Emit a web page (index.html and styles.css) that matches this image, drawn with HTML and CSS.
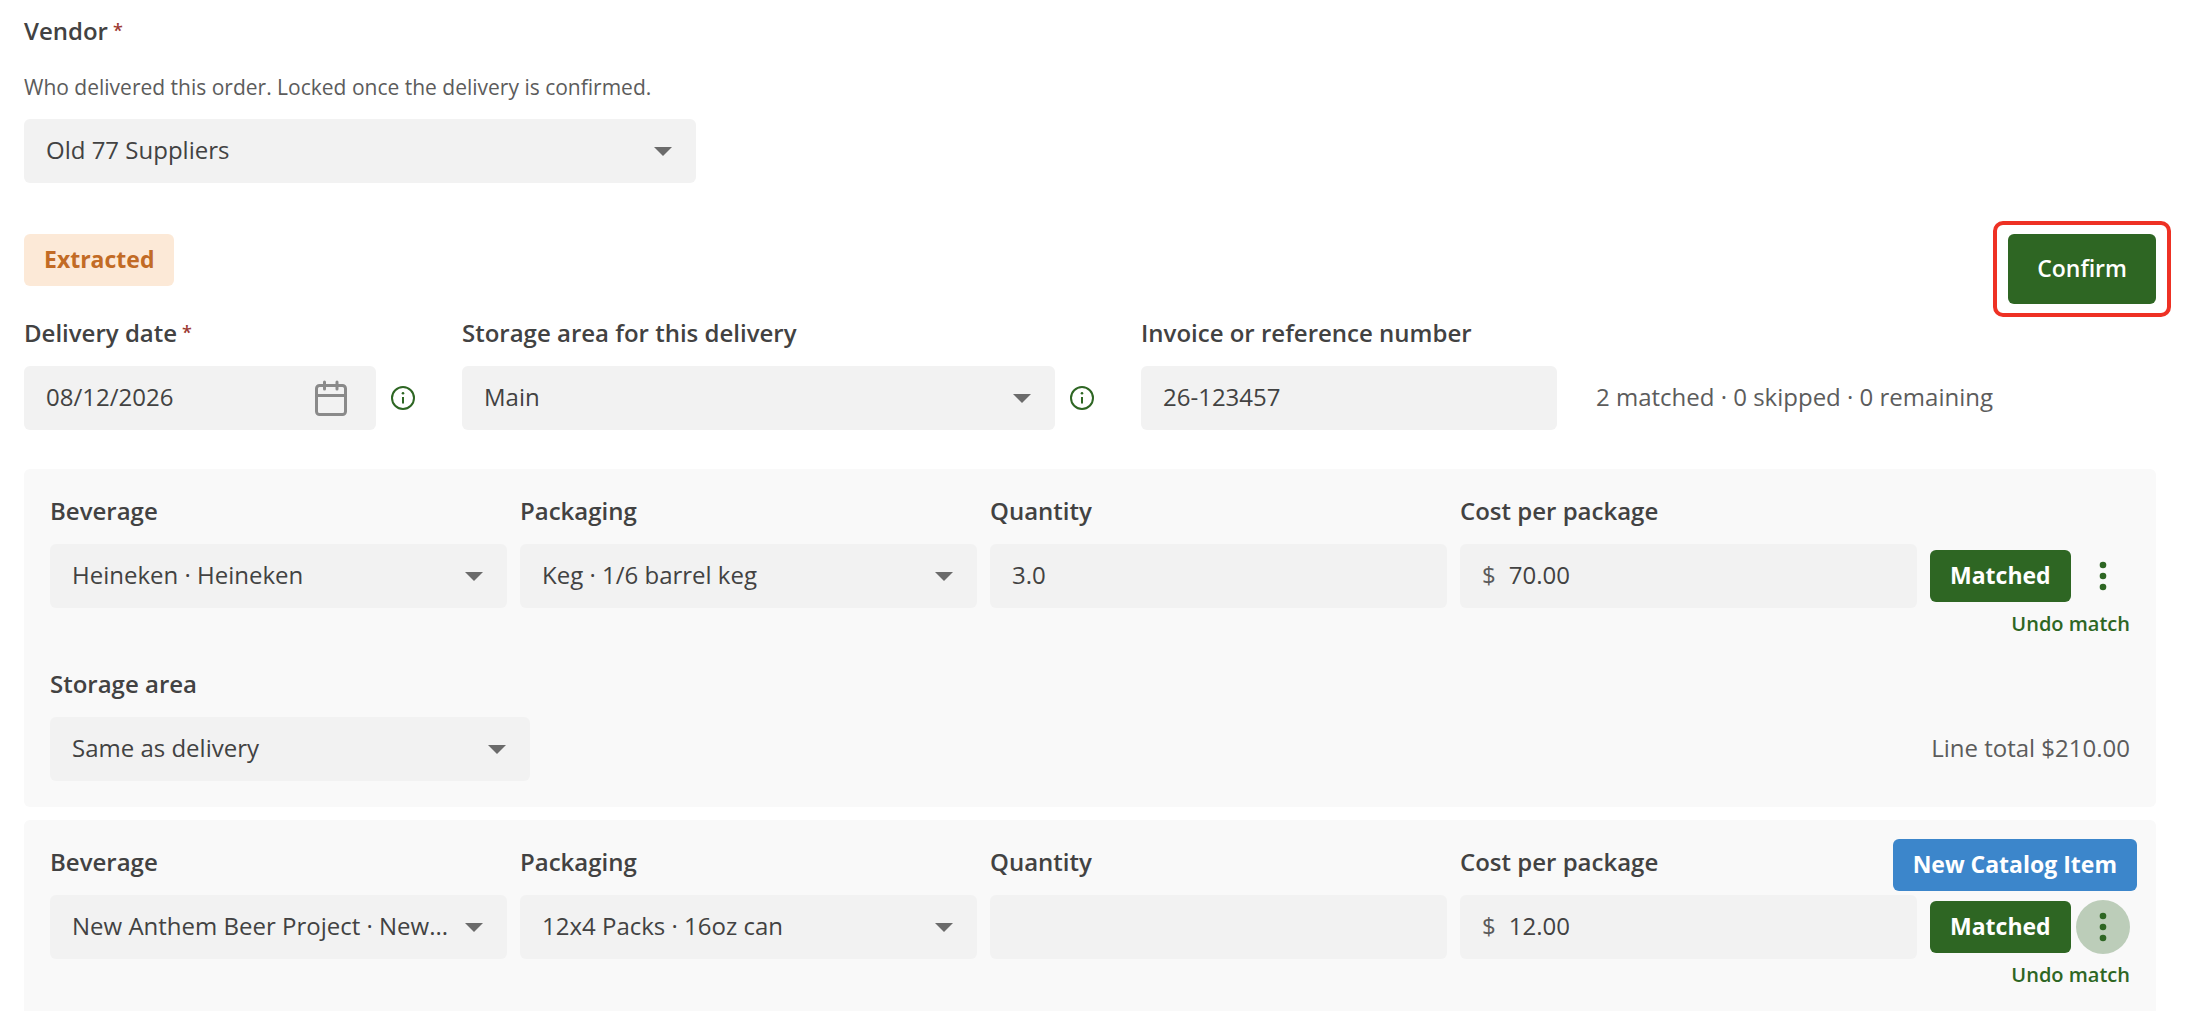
FILE: index.html
```html
<!DOCTYPE html>
<html lang="en">
<head>
  <meta charset="UTF-8" />
  <title>Confirm delivery</title>
  <link rel="stylesheet" href="styles.css">
</head>
<body>

  <form class="delivery">

    <div class="field vendor">
      <label for="vendor">Vendor<span class="required">*</span></label>
      <p class="help">Who delivered this order. Locked once the delivery is confirmed.</p>
      <div class="select">
        <select id="vendor">
          <option>Old 77 Suppliers</option>
        </select>
      </div>
    </div>

    <div class="status-row">
      <span class="badge badge-extracted">Extracted</span>
      <div class="highlight">
        <button type="submit" class="confirm">Confirm</button>
      </div>
    </div>

    <div class="details">
      <div class="field">
        <label for="date">Delivery date<span class="required">*</span></label>
        <div class="with-info">
          <div class="control date">
            <input type="text" id="date" value="08/12/2026">
            <button type="button" class="calendar" aria-label="Choose date">
              <svg width="34" height="36" viewBox="0 0 34 36" fill="none" stroke="#8a8a8a" stroke-width="3" stroke-linecap="round">
                <rect x="2.5" y="5.5" width="29" height="29" rx="3"/>
                <path d="M2.5 15.5H31.5M10.5 2V9M23 2V9"/>
              </svg>
            </button>
          </div>
          <button type="button" class="info" aria-label="About the delivery date">
            <svg width="24" height="24" viewBox="0 0 24 24" fill="none" stroke="#2e6623" stroke-width="2">
              <circle cx="12" cy="12" r="11"/>
              <path d="M12 11V17.5"/>
              <circle cx="12" cy="7.3" r="1.3" fill="#2e6623" stroke="none"/>
            </svg>
          </button>
        </div>
      </div>

      <div class="field">
        <label for="storage">Storage area for this delivery</label>
        <div class="with-info">
          <div class="select">
            <select id="storage">
              <option>Main</option>
            </select>
          </div>
          <button type="button" class="info" aria-label="About the storage area">
            <svg width="24" height="24" viewBox="0 0 24 24" fill="none" stroke="#2e6623" stroke-width="2">
              <circle cx="12" cy="12" r="11"/>
              <path d="M12 11V17.5"/>
              <circle cx="12" cy="7.3" r="1.3" fill="#2e6623" stroke="none"/>
            </svg>
          </button>
        </div>
      </div>

      <div class="field">
        <label for="invoice">Invoice or reference number</label>
        <div class="control">
          <input type="text" id="invoice" value="26-123457">
        </div>
      </div>

      <p class="summary">2 matched · 0 skipped · 0 remaining</p>
    </div>

    <section class="line">
      <div class="line-grid">
        <div class="field">
          <label for="beverage1">Beverage</label>
          <div class="select">
            <select id="beverage1">
              <option>Heineken · Heineken</option>
            </select>
          </div>
        </div>
        <div class="field">
          <label for="packaging1">Packaging</label>
          <div class="select">
            <select id="packaging1">
              <option>Keg · 1/6 barrel keg</option>
            </select>
          </div>
        </div>
        <div class="field">
          <label for="quantity1">Quantity</label>
          <div class="control">
            <input type="text" id="quantity1" value="3.0">
          </div>
        </div>
        <div class="field">
          <label for="cost1">Cost per package</label>
          <div class="control money">
            <span class="prefix">$</span>
            <input type="text" id="cost1" value="70.00">
          </div>
        </div>
        <div class="actions">
          <div class="actions-row">
            <span class="badge badge-matched">Matched</span>
            <button type="button" class="more" aria-label="More actions">
              <svg width="8" height="30" viewBox="0 0 8 30" fill="#2e6623">
                <circle cx="4" cy="4" r="3.3"/>
                <circle cx="4" cy="15" r="3.3"/>
                <circle cx="4" cy="26" r="3.3"/>
              </svg>
            </button>
          </div>
          <button type="button" class="undo">Undo match</button>
        </div>
      </div>

      <div class="line-footer">
        <div class="field line-storage">
          <label for="storage1">Storage area</label>
          <div class="select">
            <select id="storage1">
              <option>Same as delivery</option>
            </select>
          </div>
        </div>
        <p class="line-total">Line total $210.00</p>
      </div>
    </section>

    <section class="line">
      <span class="badge badge-new">New Catalog Item</span>
      <div class="line-grid">
        <div class="field">
          <label for="beverage2">Beverage</label>
          <div class="select">
            <select id="beverage2">
              <option>New Anthem Beer Project · New...</option>
            </select>
          </div>
        </div>
        <div class="field">
          <label for="packaging2">Packaging</label>
          <div class="select">
            <select id="packaging2">
              <option>12x4 Packs · 16oz can</option>
            </select>
          </div>
        </div>
        <div class="field">
          <label for="quantity2">Quantity</label>
          <div class="control">
            <input type="text" id="quantity2">
          </div>
        </div>
        <div class="field">
          <label for="cost2">Cost per package</label>
          <div class="control money">
            <span class="prefix">$</span>
            <input type="text" id="cost2" value="12.00">
          </div>
        </div>
        <div class="actions">
          <div class="actions-row">
            <span class="badge badge-matched">Matched</span>
            <button type="button" class="more more-active" aria-label="More actions">
              <svg width="8" height="30" viewBox="0 0 8 30" fill="#2e6623">
                <circle cx="4" cy="4" r="3.3"/>
                <circle cx="4" cy="15" r="3.3"/>
                <circle cx="4" cy="26" r="3.3"/>
              </svg>
            </button>
          </div>
          <button type="button" class="undo">Undo match</button>
        </div>
      </div>
    </section>

  </form>

</body>
</html>
```
FILE: styles.css
```css
* {
  box-sizing: border-box;
}

body {
  font-family: "Open Sans", sans-serif;
  font-size: 24px;
  line-height: 32px;
  color: #424242;
  background: white;
  margin: 0;
}

p {
  margin: 0;
}

button,
input,
select {
  font: inherit;
  color: inherit;
  background: none;
  border: none;
  padding: 0;
  margin: 0;
}

button {
  cursor: pointer;
}

svg {
  display: block;
}

.delivery {
  padding: 15px 30px 0 24px;
}

/* Fields */

.field {
  min-width: 0;
}

.field label {
  display: block;
  font-weight: 600;
  margin-bottom: 17px;
}

.required {
  color: #9c3a33;
  font-size: 18px;
  line-height: 1;
  vertical-align: 3px;
  margin-left: 5px;
}

.control,
.select {
  height: 64px;
  background: #f2f2f2;
  border-radius: 6px;
}

.control {
  display: flex;
  align-items: center;
}

.control input {
  flex: 1;
  min-width: 0;
  height: 64px;
  padding: 0 22px 3px;
}

.select {
  position: relative;
}

.select select {
  appearance: none;
  width: 100%;
  height: 64px;
  padding: 0 52px 2px 22px;
  text-overflow: ellipsis;
}

.select::after {
  content: "";
  position: absolute;
  top: 28px;
  right: 24px;
  border: 9px solid transparent;
  border-top-color: #6b6b6b;
  border-bottom: 0;
  pointer-events: none;
}

/* Vendor */

.vendor {
  max-width: 672px;
}

.vendor label {
  margin-bottom: 24px;
}

.help {
  font-size: 21px;
  color: #5c5c5c;
  margin-bottom: 16px;
}

/* Badges and confirm */

.badge {
  display: inline-block;
  font-size: 23px;
  font-weight: 700;
  padding: 9px 20px 11px;
  border-radius: 6px;
  white-space: nowrap;
}

.badge-extracted {
  color: #c26b25;
  background: #fce9d7;
}

.badge-matched {
  color: white;
  background: #2e6623;
}

.badge-new {
  position: absolute;
  top: 19px;
  right: 19px;
  color: white;
  background: #3c86cb;
}

.status-row {
  display: flex;
  align-items: flex-start;
  justify-content: space-between;
  margin: 51px 0 13px;
}

.highlight {
  position: relative;
}

.highlight::after {
  content: "";
  position: absolute;
  inset: -13px -15px;
  border: 4px solid #ee3124;
  border-radius: 10px;
  pointer-events: none;
}

.confirm {
  display: block;
  height: 70px;
  padding: 0 29px 2px;
  font-size: 23px;
  font-weight: 600;
  color: white;
  background: #2e6623;
  border-radius: 6px;
}

/* Delivery details */

.details {
  display: grid;
  grid-template-columns: 399fr 640fr 416fr 560fr;
  gap: 39px;
  align-items: end;
}

.with-info {
  display: flex;
  align-items: center;
  gap: 15px;
  padding-right: 8px;
}

.with-info .control,
.with-info .select {
  flex: 1;
  min-width: 0;
}

.calendar {
  margin-right: 28px;
}

.summary,
.line-total {
  line-height: 62px;
  padding-bottom: 2px;
  color: #5c5c5c;
}

/* Order lines */

.line {
  position: relative;
  background: #f9f9f9;
  border-radius: 6px;
  padding: 26px;
  margin-top: 13px;
}

.details + .line {
  margin-top: 39px;
}

.line-grid {
  display: grid;
  grid-template-columns: repeat(4, minmax(0, 1fr)) 200px;
  gap: 13px;
}

.money input {
  padding-left: 13px;
}

.prefix {
  padding: 0 0 3px 22px;
  color: #5c5c5c;
}

.actions {
  padding-top: 49px;
}

.actions-row {
  display: flex;
  align-items: center;
  justify-content: space-between;
  height: 64px;
}

.more {
  display: flex;
  align-items: center;
  justify-content: center;
  width: 54px;
  height: 54px;
  border-radius: 50%;
}

.more-active {
  background: #bccdb9;
}

.undo {
  display: block;
  margin-left: auto;
  font-size: 20px;
  font-weight: 600;
  color: #2e6623;
}

.line-footer {
  display: flex;
  align-items: flex-end;
  justify-content: space-between;
  margin-top: 28px;
}

.line-storage {
  width: 480px;
}
```
